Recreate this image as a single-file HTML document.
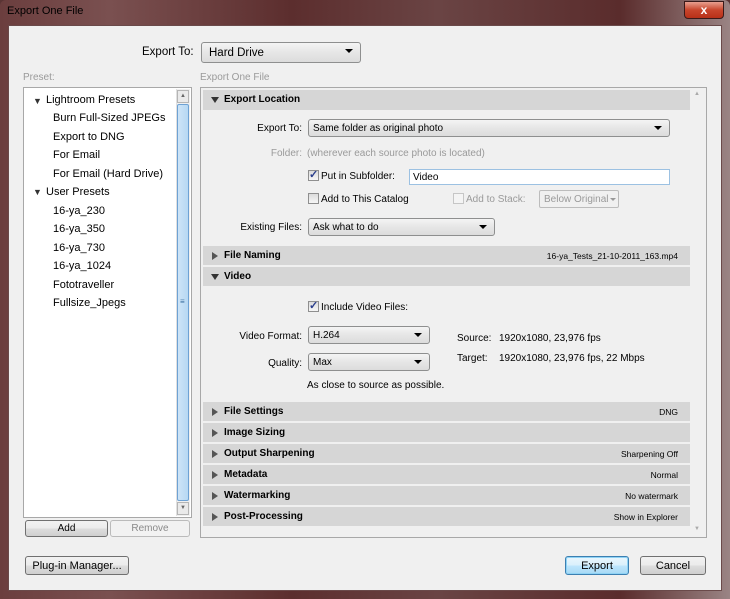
<!DOCTYPE html>
<html><head><meta charset="utf-8"><style>
*{box-sizing:border-box;margin:0;padding:0}
body{width:730px;height:599px;overflow:hidden;background:#5a3434;font-family:"Liberation Sans",sans-serif;font-size:10px;color:#000;position:relative}
.a{position:absolute;white-space:nowrap}
.rl{position:absolute;white-space:nowrap;right:428px;text-align:right}
.frame{position:absolute;left:0;top:0;width:730px;height:599px;background:linear-gradient(90deg,#6b3e3e,#7a5050 15%,#5c2e2e 40%,#6a4444 60%,#5a2c2c 85%,#9a8484);border-radius:6px 6px 0 0}
.client{position:absolute;left:8px;top:25px;width:714px;height:566px;background:#f0f0f0;border:1px solid #6a4a4a}
.dd{position:absolute;border:1px solid #8e8f8f;border-radius:3px;background:linear-gradient(#f4f4f4,#e6e6e6 50%,#dcdcdc);padding-left:4px;line-height:18px;font-size:10px}
.dd::after{content:"";position:absolute;right:7px;top:6px;width:0;height:0;border-left:4px solid transparent;border-right:4px solid transparent;border-top:4px solid #000}
.hdr{position:absolute;left:203px;width:487px;height:19px;background:#d6d6d6;font-weight:bold;line-height:20px;padding-left:21px;font-size:10px}
.hdr .t{position:absolute;left:9px;top:6px;width:0;height:0;border-top:4px solid transparent;border-bottom:4px solid transparent;border-left:6px solid #555}
.hdr .d{position:absolute;left:8px;top:7px;width:0;height:0;border-left:4px solid transparent;border-right:4px solid transparent;border-top:6px solid #333}
.hdr .r{position:absolute;right:12px;top:0;font-weight:normal;font-size:8.5px}
.btn{position:absolute;border:1px solid #707070;border-radius:3px;background:linear-gradient(#f2f2f2,#ebebeb 50%,#dddddd 51%,#cfcfcf);text-align:center;line-height:18px;font-size:11px}
.cb{position:absolute;width:11px;height:11px;border:1px solid #8f8f8f;background:linear-gradient(#dcdcdc,#f6f6f6)}
.cb.c::after{content:"✓";position:absolute;left:0;top:-3px;font-size:11px;color:#2a3e8c;font-weight:bold}
.li{position:absolute;font-size:11px;white-space:nowrap}
</style></head><body>
<div class="frame"></div>
<div class="a" style="left:7px;top:5px;font-size:11px;color:#000">Export One File</div>
<div class="a" style="left:684px;top:1px;width:40px;height:18px;border:1px solid #3a1a1a;border-radius:0 0 4px 4px;background:linear-gradient(#e8a090,#c8452c 50%,#b83018);color:#fff;text-align:center;font-weight:bold;font-size:12px;line-height:16px">x</div>
<div class="client"></div>

<div class="a" style="left:142px;top:46px;font-size:11.5px">Export To:</div>
<div class="dd" style="left:201px;top:42px;width:160px;height:21px;font-size:11.5px;line-height:20px;padding-left:7px">Hard Drive</div>

<div class="a" style="left:23px;top:72px;color:#9a9a9a">Preset:</div>
<div class="a" style="left:200px;top:72px;color:#9a9a9a">Export One File</div>

<div class="a" style="left:23px;top:87px;width:169px;height:431px;background:#fff;border:1px solid #a8a8a8"></div>
<div class="a" style="left:176px;top:89px;width:14px;height:427px;background:#f0f0f0;border-left:1px solid #e0e0e0"></div>
<div class="a" style="left:177px;top:90px;width:12px;height:13px;border:1px solid #b5b5b5;background:#eaeaea;font-size:6px;text-align:center;color:#666;line-height:11px">▲</div>
<div class="a" style="left:177px;top:104px;width:12px;height:397px;border:1px solid #6ea2d4;border-radius:2px;background:linear-gradient(90deg,#cde4f7,#b7d8f3)"></div>
<div class="a" style="left:180px;top:297px;font-size:8px;color:#3a6fa0">≡</div>
<div class="a" style="left:177px;top:502px;width:12px;height:13px;border:1px solid #b5b5b5;background:#eaeaea;font-size:6px;text-align:center;color:#666;line-height:11px">▼</div>

<div class="li" style="left:33px;top:96px;font-size:9px;color:#333">▼</div>
<div class="li" style="left:46px;top:94px">Lightroom Presets</div>
<div class="li" style="left:53px;top:112px">Burn Full-Sized JPEGs</div>
<div class="li" style="left:53px;top:131px">Export to DNG</div>
<div class="li" style="left:53px;top:149px">For Email</div>
<div class="li" style="left:53px;top:168px">For Email (Hard Drive)</div>
<div class="li" style="left:33px;top:187px;font-size:9px;color:#333">▼</div>
<div class="li" style="left:46px;top:186px">User Presets</div>
<div class="li" style="left:53px;top:205px">16-ya_230</div>
<div class="li" style="left:53px;top:223px">16-ya_350</div>
<div class="li" style="left:53px;top:242px">16-ya_730</div>
<div class="li" style="left:53px;top:260px">16-ya_1024</div>
<div class="li" style="left:53px;top:279px">Fototraveller</div>
<div class="li" style="left:53px;top:297px">Fullsize_Jpegs</div>

<div class="btn" style="left:25px;top:520px;width:83px;height:17px;line-height:16px;font-size:10px">Add</div>
<div class="btn" style="left:110px;top:520px;width:80px;height:17px;line-height:16px;color:#8a8a8a;background:#f2f2f2;border-color:#bbb;font-size:10px">Remove</div>

<div class="a" style="left:200px;top:87px;width:507px;height:451px;background:#f0f0f0;border:1px solid #a8a8a8"></div>
<div class="a" style="left:692px;top:89px;width:14px;height:447px;background:#f0f0f0"></div>
<div class="a" style="left:694px;top:91px;font-size:6px;color:#aaa">▲</div>
<div class="a" style="left:694px;top:526px;font-size:6px;color:#aaa">▼</div>

<div class="hdr" style="top:90px;height:20px"><span class="d"></span>Export Location</div>
<div class="rl" style="top:123px">Export To:</div>
<div class="dd" style="left:308px;top:119px;width:362px;height:18px;line-height:17px">Same folder as original photo</div>
<div class="rl" style="top:148px;color:#9a9a9a">Folder:</div>
<div class="a" style="left:307px;top:148px;color:#9a9a9a">(wherever each source photo is located)</div>
<div class="cb c" style="left:308px;top:170px"></div>
<div class="a" style="left:321px;top:171px">Put in Subfolder:</div>
<div class="a" style="left:409px;top:169px;width:261px;height:16px;border:1px solid #9cc1e2;background:#fff;padding-left:3px;line-height:15px">Video</div>
<div class="cb" style="left:308px;top:193px"></div>
<div class="a" style="left:321px;top:194px">Add to This Catalog</div>
<div class="cb" style="left:453px;top:193px;border-color:#c6c6c6;background:#f4f4f4"></div>
<div class="a" style="left:466px;top:194px;color:#9a9a9a">Add to Stack:</div>
<div class="a" style="left:539px;top:190px;width:80px;height:18px;border:1px solid #bcbcbc;border-radius:2px;color:#9a9a9a;padding-left:4px;line-height:17px;overflow:hidden">Below Original</div>
<div class="a" style="left:610px;top:198px;width:0;height:0;border-left:3px solid transparent;border-right:3px solid transparent;border-top:3px solid #999"></div>
<div class="rl" style="top:222px">Existing Files:</div>
<div class="dd" style="left:308px;top:218px;width:187px;height:18px;line-height:17px">Ask what to do</div>

<div class="hdr" style="top:246px"><span class="t"></span>File Naming<span class="r">16-ya_Tests_21-10-2011_163.mp4</span></div>
<div class="hdr" style="top:267px"><span class="d"></span>Video</div>
<div class="cb c" style="left:308px;top:301px"></div>
<div class="a" style="left:321px;top:302px">Include Video Files:</div>
<div class="rl" style="top:331px">Video Format:</div>
<div class="dd" style="left:308px;top:326px;width:122px;height:18px;line-height:17px">H.264</div>
<div class="rl" style="top:358px">Quality:</div>
<div class="dd" style="left:308px;top:353px;width:122px;height:18px;line-height:17px">Max</div>
<div class="a" style="left:457px;top:333px">Source:</div>
<div class="a" style="left:499px;top:333px">1920x1080, 23,976 fps</div>
<div class="a" style="left:457px;top:353px">Target:</div>
<div class="a" style="left:499px;top:353px">1920x1080, 23,976 fps, 22 Mbps</div>
<div class="a" style="left:307px;top:380px">As close to source as possible.</div>

<div class="hdr" style="top:402px"><span class="t"></span>File Settings<span class="r">DNG</span></div>
<div class="hdr" style="top:423px"><span class="t"></span>Image Sizing</div>
<div class="hdr" style="top:444px"><span class="t"></span>Output Sharpening<span class="r">Sharpening Off</span></div>
<div class="hdr" style="top:465px"><span class="t"></span>Metadata<span class="r">Normal</span></div>
<div class="hdr" style="top:486px"><span class="t"></span>Watermarking<span class="r">No watermark</span></div>
<div class="hdr" style="top:507px"><span class="t"></span>Post-Processing<span class="r">Show in Explorer</span></div>

<div class="btn" style="left:25px;top:556px;width:104px;height:19px">Plug-in Manager...</div>
<div class="btn" style="left:565px;top:556px;width:64px;height:19px;border-color:#3c7fb1;box-shadow:inset 0 0 0 1px #8fd3f5;background:linear-gradient(#eaf6fd,#d9f0fc 50%,#bee6fd 51%,#a7d9f5)">Export</div>
<div class="btn" style="left:640px;top:556px;width:66px;height:19px">Cancel</div>
</body></html>
